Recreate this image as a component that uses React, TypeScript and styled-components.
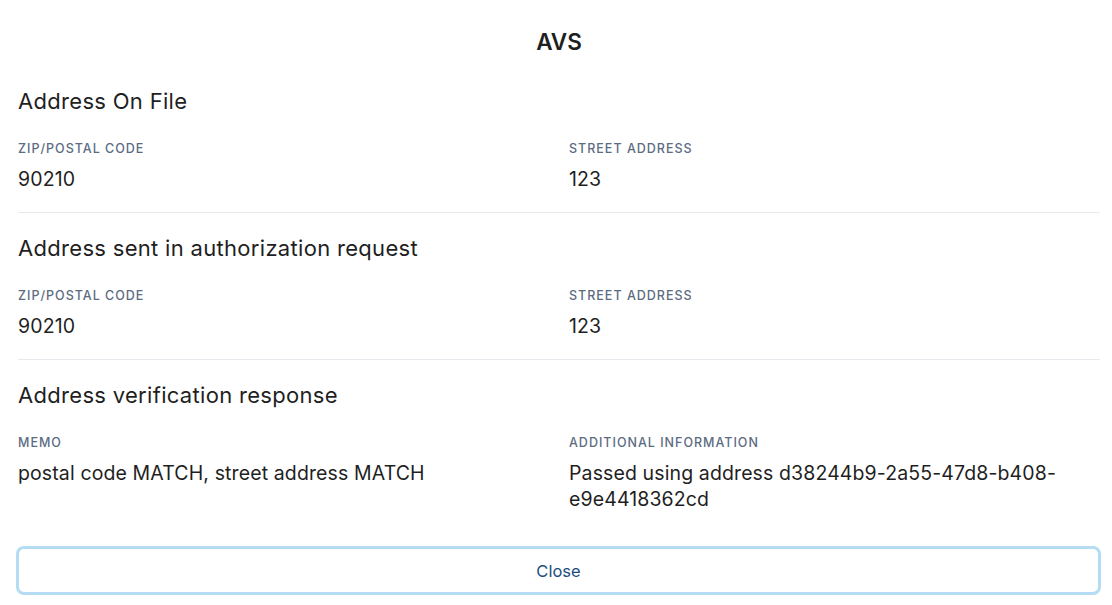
import styled, { createGlobalStyle } from 'styled-components';

const GlobalStyle = createGlobalStyle`
  body {
    margin: 0;
    background: #ffffff;
    font-family: Inter, "Noto Sans", sans-serif;
    color: #1f1f1f;
  }
`;

const Modal = styled.div`
  padding: 28px 12px 10px 18px;
`;

const Title = styled.h1`
  margin: 0 0 10px;
  text-align: center;
  font-size: 22.5px;
  line-height: 28px;
  font-weight: 600;
  color: #1f1f1f;
`;

const Section = styled.section<{ $last?: boolean }>`
  padding: 21px 0 20px;
  border-bottom: ${(p) => (p.$last ? 'none' : '1px solid #e6e9ee')};
`;

const Heading = styled.h2`
  margin: 0 0 26px;
  font-size: 22px;
  line-height: 28px;
  font-weight: 400;
  letter-spacing: 0.014em;
  color: #1f1f1f;
`;

const Grid = styled.div`
  display: grid;
  grid-template-columns: 1fr 1fr;
  column-gap: 20px;
`;

const Field = styled.div`
  display: flex;
  flex-direction: column;
  gap: 9px;
`;

const Label = styled.div`
  font-size: 12.5px;
  line-height: 16px;
  font-weight: 500;
  letter-spacing: 0.08em;
  text-transform: uppercase;
  color: #5b6b82;
`;

const Value = styled.div`
  font-size: 19.5px;
  line-height: 26px;
  letter-spacing: 0.006em;
  color: #1f1f1f;
`;

const CloseButton = styled.button`
  display: block;
  width: calc(100% + 3px);
  margin: 14px 0 0 -2px;
  height: 49px;
  background: #ffffff;
  border: 3px solid #b4dcf3;
  border-radius: 8px;
  font-family: Inter, "Noto Sans", sans-serif;
  font-size: 16.5px;
  color: #1d4e7b;
  cursor: pointer;
`;

type Row = { label: string; value: string };

const sections: { title: string; fields: Row[] }[] = [
  {
    title: 'Address On File',
    fields: [
      { label: 'ZIP/Postal Code', value: '90210' },
      { label: 'Street Address', value: '123' },
    ],
  },
  {
    title: 'Address sent in authorization request',
    fields: [
      { label: 'ZIP/Postal Code', value: '90210' },
      { label: 'Street Address', value: '123' },
    ],
  },
  {
    title: 'Address verification response',
    fields: [
      { label: 'Memo', value: 'postal code MATCH, street address MATCH' },
      { label: 'Additional Information', value: 'Passed using address d38244b9-2a55-47d8-b408-e9e4418362cd' },
    ],
  },
];

export default function App() {
  return (
    <>
      <GlobalStyle />
      <Modal>
        <Title>AVS</Title>
        {sections.map((s, i) => (
          <Section key={s.title} $last={i === sections.length - 1}>
            <Heading>{s.title}</Heading>
            <Grid>
              {s.fields.map((f) => (
                <Field key={f.label}>
                  <Label>{f.label}</Label>
                  <Value>{f.value}</Value>
                </Field>
              ))}
            </Grid>
          </Section>
        ))}
        <CloseButton>Close</CloseButton>
      </Modal>
    </>
  );
}
